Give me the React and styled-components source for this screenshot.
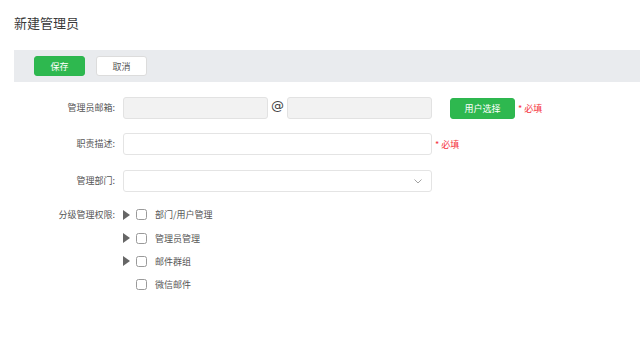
import React from 'react'
import styled, { createGlobalStyle } from 'styled-components'

const Global = createGlobalStyle`
  html, body { margin: 0; padding: 0; background: #fff; }
  body {
    font-family: "Noto Sans CJK SC", "Liberation Sans", sans-serif;
    color: #555;
  }
  * { box-sizing: border-box; }
`

const Page = styled.div`
  width: 640px;
  height: 358px;
  overflow: hidden;
`

const Title = styled.h1`
  margin: 0;
  padding: 13px 0 0 14px;
  height: 50px;
  font-size: 13px;
  font-weight: 400;
  color: #3a3a3a;
  line-height: 20px;
`

const Toolbar = styled.div`
  margin-left: 14px;
  height: 32px;
  background: #e9ebee;
  display: flex;
  align-items: center;
  gap: 11px;
  padding-left: 20px;
`

const Button = styled.button`
  height: 20px;
  width: ${p => p.$w || 51}px;
  border-radius: 3px;
  font-family: inherit;
  font-size: 9px;
  padding: 0;
  cursor: pointer;
  border: 1px solid ${p => (p.$primary ? '#2db64f' : '#dcdcdc')};
  background: ${p => (p.$primary ? '#2eb84f' : '#fff')};
  color: ${p => (p.$primary ? '#fff' : '#555')};
`

const Form = styled.div`
  padding-top: 15px;
  display: flex;
  flex-direction: column;
`

const Row = styled.div`
  display: flex;
  align-items: ${p => (p.$top ? 'flex-start' : 'center')};
  height: ${p => (p.$top ? 'auto' : '22px')};
  margin-bottom: ${p => p.$mb || 14}px;
`

const Label = styled.div`
  width: 116px;
  padding-right: 1px;
  text-align: right;
  font-size: 9px;
  line-height: 22px;
  color: #555;
  flex-shrink: 0;
  margin-right: 7px;
`

const Input = styled.div`
  height: 22px;
  width: ${p => p.$w}px;
  border: 1px solid ${p => (p.$disabled ? '#e2e2e2' : '#e4e4e4')};
  border-radius: 3px;
  background: ${p => (p.$disabled ? '#f2f2f2' : '#fff')};
  position: relative;
`

const At = styled.span`
  width: 19px;
  text-align: center;
  font-family: "DejaVu Sans", sans-serif;
  font-size: 13px;
  color: #444;
  line-height: 22px;
  margin-top: -4px;
`

const Required = styled.span`
  font-size: 9px;
  color: #f5323c;
  margin-left: ${p => p.$ml || 3}px;
  white-space: nowrap;
`

const Chevron = styled.svg`
  position: absolute;
  right: 9px;
  top: 8px;
`

const Perms = styled.div`
  display: flex;
  flex-direction: column;
  margin-top: -1px;
`

const PermItem = styled.div`
  display: flex;
  align-items: center;
  height: 23.4px;
`

const Caret = styled.span`
  width: 13px;
  display: flex;
  align-items: center;
  svg { visibility: ${p => (p.$hidden ? 'hidden' : 'visible')}; }
`

const Check = styled.span`
  width: 11px;
  height: 11px;
  border: 1px solid #9a9a9a;
  border-radius: 2.5px;
  background: #fff;
  margin-right: 8px;
`

const PermText = styled.span`
  font-size: 9px;
  color: #555;
`

const perms = [
  { name: '部门/用户管理', children: true },
  { name: '管理员管理', children: true },
  { name: '邮件群组', children: true },
  { name: '微信邮件', children: false },
]

export default function App() {
  return (
    <Page>
      <Global />
      <Title>新建管理员</Title>
      <Toolbar>
        <Button $primary>保存</Button>
        <Button>取消</Button>
      </Toolbar>
      <Form>
        <Row>
          <Label>管理员邮箱:</Label>
          <Input $disabled $w={145} />
          <At>@</At>
          <Input $disabled $w={145} />
          <Button $primary $w={65} style={{ marginLeft: 18, height: 21 }}>用户选择</Button>
          <Required>* 必填</Required>
        </Row>
        <Row $mb={15}>
          <Label>职责描述:</Label>
          <Input $w={309} />
          <Required>* 必填</Required>
        </Row>
        <Row $mb={12}>
          <Label>管理部门:</Label>
          <Input $w={309}>
            <Chevron width="8" height="5" viewBox="0 0 8 5">
              <path d="M0.5 0.5 L4 4 L7.5 0.5" fill="none" stroke="#999" strokeWidth="0.9" />
            </Chevron>
          </Input>
        </Row>
        <Row $top>
          <Label>分级管理权限:</Label>
          <Perms>
            {perms.map(p => (
              <PermItem key={p.name}>
                <Caret $hidden={!p.children}>
                  <svg width="7" height="10" viewBox="0 0 7 10">
                    <path d="M0 0 L7 5 L0 10 Z" fill="#666" />
                  </svg>
                </Caret>
                <Check />
                <PermText>{p.name}</PermText>
              </PermItem>
            ))}
          </Perms>
        </Row>
      </Form>
    </Page>
  )
}
